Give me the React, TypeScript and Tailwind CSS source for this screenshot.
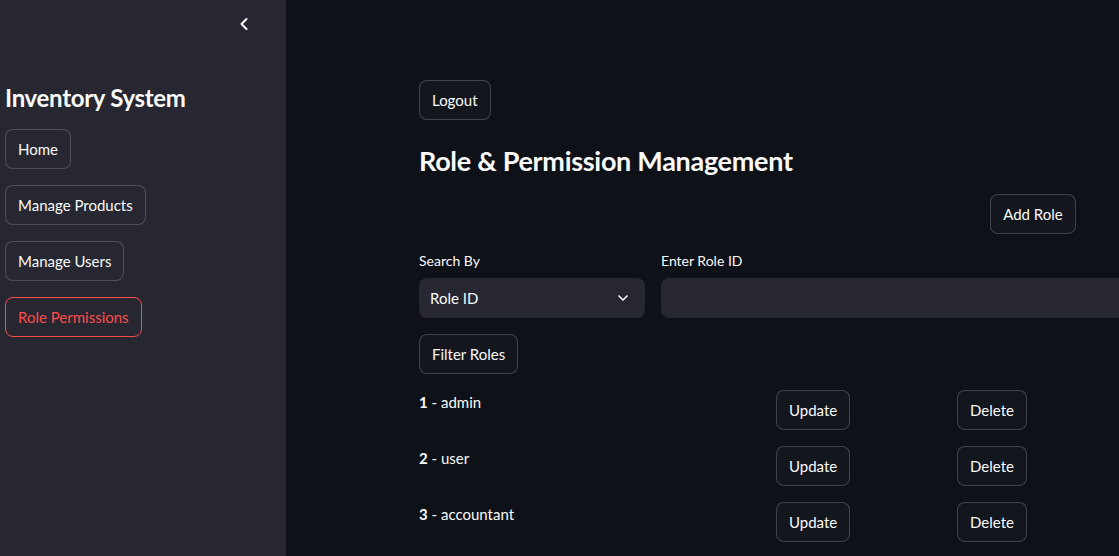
import { ChevronLeft, ChevronDown } from "lucide-react";

const navItems = ["Home", "Manage Products", "Manage Users", "Role Permissions"];

const roles = [
  { id: 1, name: "admin" },
  { id: 2, name: "user" },
  { id: 3, name: "accountant" },
];

function Btn({ label, active = false, dark = false }: { label: string; active?: boolean; dark?: boolean }) {
  return (
    <button
      className={`inline-flex h-10 items-center justify-center rounded-lg border px-3 text-[15px] leading-none ${
        active
          ? "border-[#ff4b4b] text-[#ff4b4b]"
          : "border-[rgba(250,250,250,0.2)] text-[#fafafa]"
      } ${dark ? "bg-[#13161d]" : "bg-[#262730]"}`}
    >
      {label}
    </button>
  );
}

export default function App() {
  return (
    <div
      className="flex h-[556px] w-[1119px] overflow-hidden bg-[#0e1117] text-[#fafafa]"
      style={{ fontFamily: "Lato, 'Noto Sans', sans-serif" }}
    >
      {/* Sidebar */}
      <aside className="flex h-full w-[286px] shrink-0 flex-col bg-[#262730] px-[5px]">
        <div className="flex h-12 items-center justify-end pr-[27px]">
          <ChevronLeft className="h-5 w-5 text-[#fafafa]" strokeWidth={2.5} />
        </div>
        <h1 className="mt-[38px] text-[24px] font-bold leading-none tracking-[-0.3px]">
          Inventory System
        </h1>
        <nav className="mt-[19px] flex flex-col items-start gap-4">
          {navItems.map((item) => (
            <Btn key={item} label={item} active={item === "Role Permissions"} />
          ))}
        </nav>
      </aside>

      {/* Main */}
      <main className="flex-1 overflow-hidden pl-[133px] pt-20">
        <div className="flex w-[710px] flex-col">
          <div>
            <Btn label="Logout" dark />
          </div>
          <h2 className="mt-[21px] text-[27px] font-bold leading-[40px] tracking-[-0.3px]">
            Role &amp; Permission Management
          </h2>
          <div className="mt-[13px] grid grid-cols-[4fr_1fr] gap-4">
            <div />
            <div>
              <Btn label="Add Role" dark />
            </div>
          </div>

          <div className="mt-[17px] grid grid-cols-[226px_1fr] gap-4">
            <div className="flex flex-col">
              <label className="text-[14px] leading-[19px]">Search By</label>
              <div className="mt-2 flex h-10 items-center justify-between rounded-lg bg-[#262730] pl-[11px] pr-[14px] text-[15px]">
                <span>Role ID</span>
                <ChevronDown className="h-4 w-4" strokeWidth={2.5} />
              </div>
            </div>
            <div className="flex flex-col">
              <label className="text-[14px] leading-[19px]">Enter Role ID</label>
              <div className="mt-2 h-10 rounded-lg bg-[#262730]" />
            </div>
          </div>

          <div className="mt-4">
            <Btn label="Filter Roles" dark />
          </div>

          <div className="mt-4 flex flex-col gap-4">
            {roles.map((r) => (
              <div key={r.id} className="grid grid-cols-[341px_165px_1fr] gap-4">
                <div className="text-[15px] leading-[25px]">
                  <span className="font-bold">{r.id}</span> - {r.name}
                </div>
                <div>
                  <Btn label="Update" dark />
                </div>
                <div>
                  <Btn label="Delete" dark />
                </div>
              </div>
            ))}
          </div>
        </div>
      </main>
    </div>
  );
}
